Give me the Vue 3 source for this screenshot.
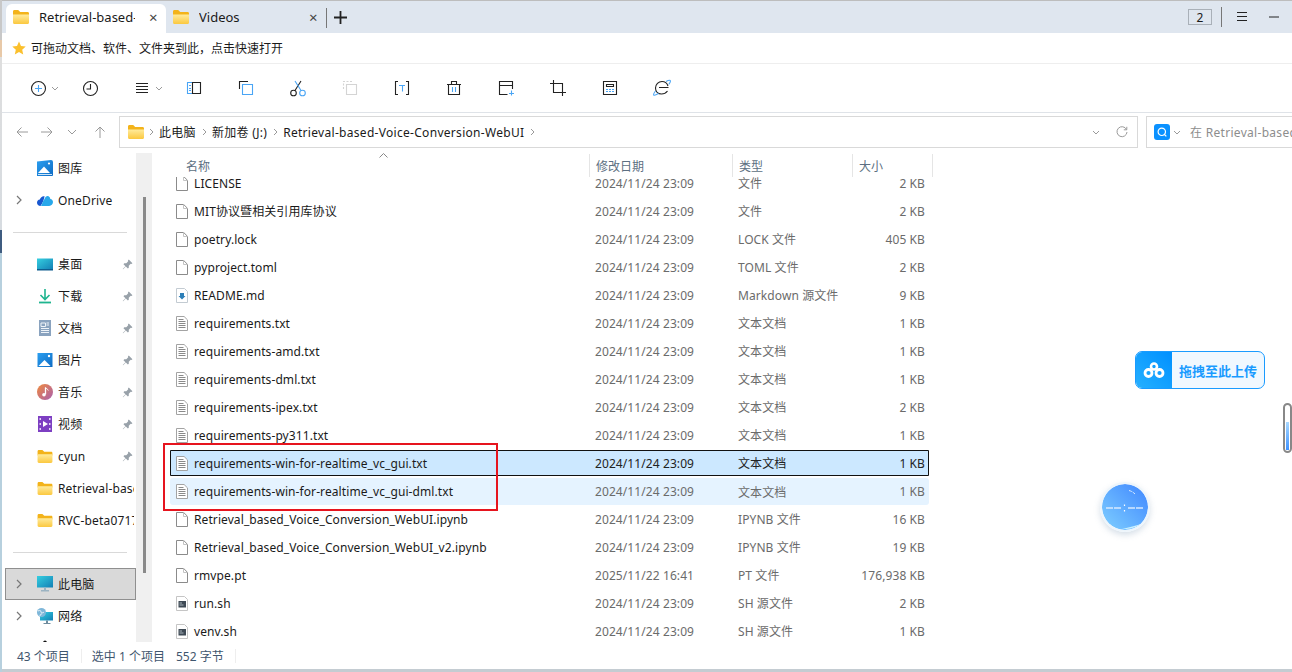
<template>
  <div class="window">
    <svg class="sprite" xmlns="http://www.w3.org/2000/svg">
      <defs>
        <linearGradient id="gFolder" x1="0" y1="0" x2="0" y2="1"><stop offset="0" stop-color="#ffeb9c" /><stop offset="1" stop-color="#fbc83f" /></linearGradient>
        <linearGradient id="gBlue" x1="0" y1="0" x2="1" y2="1"><stop offset="0" stop-color="#2b9ff0" /><stop offset="1" stop-color="#0f6cc4" /></linearGradient>
        <linearGradient id="gTeal" x1="0" y1="0" x2="1" y2="1"><stop offset="0" stop-color="#35cfe0" /><stop offset="1" stop-color="#137fb5" /></linearGradient>
        <linearGradient id="gMusic" x1="0" y1="0" x2="1" y2="1"><stop offset="0" stop-color="#f08a3c" /><stop offset="1" stop-color="#a95fb0" /></linearGradient>
        <linearGradient id="gOrb" x1="1" y1="0" x2="0" y2="1"><stop offset="0" stop-color="#3f86ff" /><stop offset="1" stop-color="#7fd0ff" /></linearGradient>
        <symbol id="folder" viewBox="0 0 16 14">
          <path d="M0 1.500C0 .7.6 0 1.400 0h3.800l2 2H14.600c.8 0 1.400.6 1.400 1.400V6H0z" fill="#f3b31a" />
          <path d="M0 4.500h16v8c0 .8-.6 1.500-1.400 1.500H1.400C.6 14 0 13.300 0 12.500z" fill="url(#gFolder)" />
        </symbol>
        <symbol id="blank" viewBox="0 0 12 15">
          <path d="M.5.5h7.200l3.800 3.800v10.200H.5z" fill="#fff" stroke="#8b8b8b" />
          <path d="M7.500.5v4h4" fill="none" stroke="#c4c4c4" />
        </symbol>
        <symbol id="txt" viewBox="0 0 12 15">
          <path d="M.5.5h7.600l3.400 3.400v10.600H.5z" fill="#fff" stroke="#a3a3a3" />
          <path d="M2.500 3.500h5M2.500 5.500h7M2.500 7.500h7M2.500 9.500h7M2.500 11.500h7" stroke="#8a8a8a" />
        </symbol>
        <symbol id="md" viewBox="0 0 12 15">
          <path d="M.5.5h8l3 3v11H.5z" fill="#fff" stroke="#c3cbd2" />
          <path d="M4 5h4v3h1.500L6 11.500 2.500 8H4z" fill="#2d7fb8" />
        </symbol>
        <symbol id="sh" viewBox="0 0 12 15">
          <path d="M.5.5h8l3 3v11H.5z" fill="#fff" stroke="#c5c5c5" />
          <path d="M2.500 5h7.500v6.500H2.500z" fill="#3f4a55" />
          <path d="M3.500 7h2.500M3.500 9h4" stroke="#a9b4bd" />
        </symbol>
        <symbol id="gallery" viewBox="0 0 16 16">
          <path d="M0 1.500 14 0a2 2 0 0 1 2 2v13a1 1 0 0 1-1 1H0z" fill="url(#gBlue)" />
          <path d="M1 13 7 6.500 13 13z" fill="#fff" />
          <circle cx="12" cy="3.500" r="1.100" fill="#fff" />
          <path d="M1 14h14v1H1z" fill="#cfe6f8" />
        </symbol>
        <symbol id="cloud" viewBox="0 0 16 12">
          <path d="M3.500 11.500C1.500 11.500 0 10 0 8.300c0-1.600 1.200-3 2.800-3.200C3.600 2.600 5.600 1.200 7.600 1.800 7 4.500 6 8.500 3.500 11.500z" fill="#1857d0" />
          <path d="M4 11.500c1.400-3 2.200-5.200 3.500-7C8.300 2.400 10 1 11.500 1.800c1 .5 1.600 1.400 1.800 2.600 1.600.2 2.700 1.600 2.700 3.200 0 2.200-1.700 3.900-3.800 3.900z" fill="#28a8ea" />
        </symbol>
        <symbol id="desk" viewBox="0 0 16 12">
          <path d="M0 0h16v11H0z" fill="url(#gTeal)" />
          <path d="M0 10.500h16V12H0z" fill="#0e5d8f" />
        </symbol>
        <symbol id="down" viewBox="0 0 16 16">
          <path d="M8 1v10M3.500 7 8 11.500 12.500 7" fill="none" stroke="#1fb58f" stroke-width="1.600" />
          <path d="M2 14.500h12" stroke="#1fb58f" stroke-width="1.800" />
        </symbol>
        <symbol id="docs" viewBox="0 0 16 16">
          <path d="M2 0h12v16H2z" fill="#8aa3bf" />
          <path d="M4 3h4.500v3.500H4zM9.500 3h2.500M9.500 5h2.500M4 8.500h8M4 10.500h8M4 12.500h8" stroke="#eef3f8" fill="none" />
        </symbol>
        <symbol id="pic" viewBox="0 0 16 16">
          <path d="M.5 1h15v14H.5z" fill="url(#gBlue)" />
          <path d="M1.500 14 7.500 8 13.500 14z" fill="#fff" />
          <circle cx="12" cy="4" r="1.200" fill="#fff" />
        </symbol>
        <symbol id="music" viewBox="0 0 16 16">
          <circle cx="8" cy="8" r="8" fill="url(#gMusic)" />
          <path d="M8.500 3.500v6.800" stroke="#fff" stroke-width="1.300" />
          <path d="M8.500 3.500c1 1.300 2.300 1.500 2.800 3" stroke="#fff" fill="none" />
          <circle cx="7" cy="10.800" r="1.800" fill="#fff" />
        </symbol>
        <symbol id="video" viewBox="0 0 16 16">
          <path d="M1 0h14v16H1z" fill="#7d3fc2" />
          <path d="M6 5v6l5-3z" fill="#fff" />
          <path d="M2.500 2h1.500v2H2.500zM2.500 7h1.500v2H2.500zM2.500 12h1.500v2H2.500zM12 2h1.500v2H12zM12 7h1.500v2H12zM12 12h1.500v2H12z" fill="#e3d2f6" />
        </symbol>
        <symbol id="pc" viewBox="0 0 16 16">
          <path d="M0 0h16v11.500H0z" fill="url(#gTeal)" />
          <path d="M7 11.500h2v2.500H7zM4 14h8v1.500H4z" fill="#9bb3c2" />
        </symbol>
        <symbol id="net" viewBox="0 0 16 16">
          <path d="M3 4h13v8.500H3z" fill="url(#gTeal)" />
          <path d="M9 12.500h2V15H9zM6.500 15h7v1h-7z" fill="#6f8c9e" />
          <circle cx="4.500" cy="4.500" r="4.500" fill="#7fb7d9" />
          <path d="M1 3c2-1 3-.5 3 1s2 1 3 0M3 8c0-2 1-2 2-2" stroke="#e7f3fa" fill="none" />
        </symbol>
        <symbol id="linux" viewBox="0 0 16 16">
          <ellipse cx="8" cy="3" rx="2" ry="2.500" fill="#111" />
          <ellipse cx="8" cy="10" rx="4" ry="5.500" fill="#111" />
        </symbol>
        <symbol id="pin" viewBox="0 0 12 12">
          <path d="M7.400.6 11.400 4.600 10.300 5.500 9.500 5.200 7.400 7.300 7.400 9.500 6.400 10.400 4.200 8.200 1.200 11.200.8 10.800 3.800 7.800 1.600 5.600 2.500 4.600 4.700 4.600 6.800 2.500 6.500 1.700z" fill="#98a1a9" />
        </symbol>
      </defs>
    </svg>

    <header class="tabs">
      <div class="tab active">
        <svg class="ico-folder"><use href="#folder" /></svg>
        <span class="tab-title">Retrieval-based-Voice</span>
        <span class="tab-x">×</span>
      </div>
      <div class="tab">
        <svg class="ico-folder"><use href="#folder" /></svg>
        <span class="tab-title">Videos</span>
        <span class="tab-x">×</span>
      </div>
      <span class="tab-sep"></span>
      <svg class="tab-plus" width="13" height="13" viewBox="0 0 13 13"><path d="M6.500 0v13M0 6.500h13" stroke="#222" stroke-width="1.800" /></svg>
      <div class="win-btns">
        <span class="count">2</span>
        <span class="win-sep"></span>
        <svg width="14" height="10" viewBox="0 0 14 10"><path d="M2 .5h10M2 4.500h10M2 8.500h10" stroke="#222" /></svg>
        <svg class="win-min" width="12" height="2" viewBox="0 0 12 2"><path d="M1 1h10" stroke="#222" /></svg>
      </div>
    </header>

    <div class="quick">
      <svg width="14" height="14" viewBox="0 0 14 14"><path d="M7 .5 9 5l4.700.5-3.500 3.200 1 4.700L7 11l-4.200 2.400 1-4.700L.3 5.500 5 5z" fill="#fbc02d" /></svg>
      <span>可拖动文档、软件、文件夹到此，点击快速打开</span>
    </div>

    <div class="toolbar">
      <div class="tool">
        <svg class="t" viewBox="0 0 20 20"><circle cx="10.500" cy="10.500" r="7" class="k" /><path d="M10.500 7v7M7 10.500h7" class="b" /></svg>
        <svg class="chev" viewBox="0 0 8 5"><path d="M1 1l3 3 3-3" /></svg>
      </div>
      <div class="tool">
        <svg class="t" viewBox="0 0 20 20"><circle cx="10.500" cy="10.500" r="7" class="k" /><path d="M10.500 6v5H6.500" class="k" /></svg>
      </div>
      <div class="tool">
        <svg class="t" viewBox="0 0 20 20"><path d="M4 5.500h12M4 8.500h12M4 11.500h12M4 14.500h12" class="k" /></svg>
        <svg class="chev" viewBox="0 0 8 5"><path d="M1 1l3 3 3-3" /></svg>
      </div>
      <div class="tool">
        <svg class="t" viewBox="0 0 20 20"><path d="M8.500 4.500h-5v11h5" class="b" /><path d="M8.500 4.500h8v11h-8z" class="k" /><path d="M5 7.500h2M5 10.500h2M5 12.500h2" class="b" /></svg>
      </div>
      <div class="tool">
        <svg class="t" viewBox="0 0 20 20"><path d="M3.500 11V3.500H12" class="k" /><path d="M6.500 6.500h10v10h-10z" class="b" /></svg>
      </div>
      <div class="tool">
        <svg class="t" viewBox="0 0 20 20"><circle cx="5.500" cy="15" r="2.800" class="k" /><circle cx="14.500" cy="15" r="2.800" class="b" /><path d="M7 12.500 13 3" class="k" /><path d="M13 12.500 7 3" class="b" /></svg>
      </div>
      <div class="tool">
        <svg class="t" viewBox="0 0 20 20"><path d="M3.500 11V3.500H12" class="g" stroke-dasharray="2 1.500" /><path d="M6.500 6.500h10v10h-10z" class="g" /></svg>
      </div>
      <div class="tool">
        <svg class="t" viewBox="0 0 20 20"><path d="M6 3.500H3.500v13H6M14 3.500h2.500v13H14" class="k" /><path d="M7 7.500h6M10.500 7.500v6" class="b" /></svg>
      </div>
      <div class="tool">
        <svg class="t" viewBox="0 0 20 20"><path d="M4.500 6.500h11v10h-11zM3 6.500h14M7.500 6V3.500h5V6" class="k" /><path d="M8.500 9v5M11.500 9v5" class="b" /></svg>
      </div>
      <div class="tool">
        <svg class="t" viewBox="0 0 20 20"><path d="M16.500 11V3.500h-13v13h8M3.500 7.500h13" class="k" /><path d="M15.500 12.500v5M13 15.500h5" class="b" /></svg>
      </div>
      <div class="tool">
        <svg class="t" viewBox="0 0 20 20"><path d="M5.500 2v12.500H18M2 5.500h12.500V18" class="k" /></svg>
      </div>
      <div class="tool">
        <svg class="t" viewBox="0 0 20 20"><path d="M3.500 3.500h13v13h-13z" class="k" /><path d="M6.500 6.500h7v2h-7z" class="k" /><path d="M6 11.500h2M9 11.500h2M12 11.500h2M6 13.500h2M9 13.500h2M12 13.500h2" class="b" /></svg>
      </div>
      <div class="tool">
        <svg class="t" viewBox="0 0 20 20"><path d="M16.500 9.500H7M16 8c-.8-2.500-3-4.500-6-4.500-3.500 0-6.500 3-6.500 6.500s2.500 6 6 6c2.500 0 4.500-1 6-3" class="k" /><path d="M14 3.500c2-1 3.500-1.500 4.200-1s-.2 2.500-1.500 4M3.500 13c-1.500 2-2.300 3.500-1.800 4s2.800-.3 4.800-1.500" class="b" /></svg>
      </div>
    </div>

    <div class="address">
      <div class="nav">
        <svg viewBox="0 0 14 14"><path d="M13 7H2M6.500 2.500 2 7l4.500 4.500" /></svg>
        <svg viewBox="0 0 14 14"><path d="M1 7h11M7.500 2.500 12 7l-4.500 4.500" /></svg>
        <svg class="nav-down" viewBox="0 0 14 14"><path d="M3 5l4 4 4-4" /></svg>
        <svg class="nav-up" viewBox="0 0 14 14"><path d="M7 13V2M2.500 6.500 7 2l4.500 4.500" /></svg>
      </div>
      <div class="crumbs">
        <svg class="ico-folder"><use href="#folder" /></svg>
        <template v-for="c in crumbs" :key="c">
          <svg class="crumb-sep" viewBox="0 0 5 8"><path d="M1 1l3 3-3 3" /></svg>
          <span>{{ c }}</span>
        </template>
        <svg class="crumb-sep" viewBox="0 0 5 8"><path d="M1 1l3 3-3 3" /></svg>
        <svg class="crumb-down chev" viewBox="0 0 8 5"><path d="M1 1l3 3 3-3" /></svg>
        <svg class="refresh" width="12" height="12" viewBox="0 0 12 12"><path d="M10.500 3.500A5 5 0 1 0 11 6M10.800 .8v3H7.800" fill="none" stroke="#9a9a9a" /></svg>
      </div>
      <div class="search">
        <span class="search-logo"><svg width="10" height="10" viewBox="0 0 10 10"><circle cx="4.800" cy="4.800" r="3.700" fill="none" stroke="#fff" stroke-width="1.200" /><path d="M7.500 7.500 9.300 9.300" stroke="#fff" stroke-width="1.200" /></svg></span>
        <svg class="chev" viewBox="0 0 8 5"><path d="M1 1l3 3 3-3" /></svg>
        <span class="search-text">在 Retrieval-based-Voice-Conversion-WebUI 中搜索</span>
      </div>
    </div>

    <div class="main">
      <aside class="sidebar">
        <template v-for="(s, i) in sideItems" :key="i">
          <div v-if="s.divider" class="side-div"><span></span></div>
          <div v-else class="side-row" :class="{ current: s.current }">
            <svg v-if="s.arrow" class="side-arrow" viewBox="0 0 6 10"><path d="M1 1l4 4-4 4" /></svg>
            <svg class="side-ico" :class="s.size"><use :href="'#' + s.icon" /></svg>
            <span v-if="s.label" class="side-label">{{ s.label }}</span>
            <svg v-if="s.pin" class="side-pin"><use href="#pin" /></svg>
          </div>
        </template>
      </aside>
      <div class="side-track"><span class="side-thumb"></span></div>

      <section class="files">
        <div class="head">
          <div class="head-cell">名称<svg class="sort" viewBox="0 0 9 5"><path d="M.5 4.500 4.500 .5l4 4" /></svg></div>
          <div class="head-cell">修改日期</div>
          <div class="head-cell">类型</div>
          <div class="head-cell">大小</div>
        </div>
        <div class="list">
          <div class="list-inner">
            <div v-for="f in files" :key="f.name" class="row" :class="f.state">
              <div class="name">
                <svg class="file-ico"><use :href="'#' + f.icon" /></svg>
                <span>{{ f.name }}</span>
              </div>
              <div class="cell">{{ f.date }}</div>
              <div class="cell">{{ f.type }}</div>
              <div class="cell size">{{ f.size }}</div>
            </div>
          </div>
        </div>
      </section>
    </div>

    <footer class="status">
      <span>43 个项目</span>
      <span class="status-sep"></span>
      <span>选中 1 个项目</span>
      <span class="status-bytes">552 字节</span>
      <span class="status-sep last"></span>
    </footer>
    <div class="bottom-edge"></div>

    <!-- sliver of desktop to the left of the window -->
    <div class="desk-edge"></div>

    <div class="red-box"></div>

    <div class="upload">
      <span class="upload-logo">
        <svg width="22" height="16" viewBox="0 0 22 16">
          <circle cx="11" cy="4.500" r="3" fill="none" stroke="#fff" stroke-width="2.600" />
          <circle cx="5.500" cy="11" r="3.500" fill="none" stroke="#fff" stroke-width="2.800" />
          <circle cx="16.500" cy="11" r="3.500" fill="none" stroke="#fff" stroke-width="2.800" />
        </svg>
      </span>
      <span class="upload-text">拖拽至此上传</span>
    </div>

    <div class="edge-slider"><span></span></div>

    <div class="orb">
      <svg width="46" height="46" viewBox="0 0 46 46">
        <circle cx="23" cy="23" r="23" fill="url(#gOrb)" />
        <path d="M4 24h7M12 24h7M26 24h7M34 24h7" stroke="#d6e9ff" stroke-width="1.400" />
        <path d="M22.500 20.500v1.500M22.500 26v1.500" stroke="#fff" stroke-width="1.200" />
        <path d="M27 6.500c2 .5 4 1.500 6 3.500" stroke="#dcecff" stroke-width="1" fill="none" stroke-dasharray="3 1" />
        <path d="M20 45c6 .5 14-1 19-5-5 2-12 3-19 5z" fill="#c9f1ff" />
      </svg>
    </div>
  </div>
</template>

<script setup>
const crumbs = ['此电脑', '新加卷 (J:)', 'Retrieval-based-Voice-Conversion-WebUI']

const sideItems = [
  { icon: 'gallery', label: '图库' },
  { icon: 'cloud', label: 'OneDrive', arrow: true, size: 'wide' },
  { divider: true },
  { icon: 'desk', label: '桌面', pin: true, size: 'wide' },
  { icon: 'down', label: '下载', pin: true },
  { icon: 'docs', label: '文档', pin: true },
  { icon: 'pic', label: '图片', pin: true },
  { icon: 'music', label: '音乐', pin: true },
  { icon: 'video', label: '视频', pin: true },
  { icon: 'folder', label: 'cyun', pin: true, size: 'wide' },
  { icon: 'folder', label: 'Retrieval-based-Voice', size: 'wide' },
  { icon: 'folder', label: 'RVC-beta0717', size: 'wide' },
  { divider: true },
  { icon: 'pc', label: '此电脑', arrow: true, current: true },
  { icon: 'net', label: '网络', arrow: true },
  { icon: 'linux' }
]

const d = '2024/11/24 23:09'
const files = [
  { name: 'LICENSE', icon: 'blank', date: d, type: '文件', size: '2 KB' },
  { name: 'MIT协议暨相关引用库协议', icon: 'blank', date: d, type: '文件', size: '2 KB' },
  { name: 'poetry.lock', icon: 'blank', date: d, type: 'LOCK 文件', size: '405 KB' },
  { name: 'pyproject.toml', icon: 'blank', date: d, type: 'TOML 文件', size: '2 KB' },
  { name: 'README.md', icon: 'md', date: d, type: 'Markdown 源文件', size: '9 KB' },
  { name: 'requirements.txt', icon: 'txt', date: d, type: '文本文档', size: '1 KB' },
  { name: 'requirements-amd.txt', icon: 'txt', date: d, type: '文本文档', size: '1 KB' },
  { name: 'requirements-dml.txt', icon: 'txt', date: d, type: '文本文档', size: '1 KB' },
  { name: 'requirements-ipex.txt', icon: 'txt', date: d, type: '文本文档', size: '2 KB' },
  { name: 'requirements-py311.txt', icon: 'txt', date: d, type: '文本文档', size: '1 KB' },
  { name: 'requirements-win-for-realtime_vc_gui.txt', icon: 'txt', date: d, type: '文本文档', size: '1 KB', state: 'selected' },
  { name: 'requirements-win-for-realtime_vc_gui-dml.txt', icon: 'txt', date: d, type: '文本文档', size: '1 KB', state: 'hovered' },
  { name: 'Retrieval_based_Voice_Conversion_WebUI.ipynb', icon: 'blank', date: d, type: 'IPYNB 文件', size: '16 KB' },
  { name: 'Retrieval_based_Voice_Conversion_WebUI_v2.ipynb', icon: 'blank', date: d, type: 'IPYNB 文件', size: '19 KB' },
  { name: 'rmvpe.pt', icon: 'blank', date: '2025/11/22 16:41', type: 'PT 文件', size: '176,938 KB' },
  { name: 'run.sh', icon: 'sh', date: d, type: 'SH 源文件', size: '2 KB' },
  { name: 'venv.sh', icon: 'sh', date: d, type: 'SH 源文件', size: '1 KB' }
]
</script>

<style>
html, body {
  margin: 0;
  background: #fff;
}
</style>

<style scoped>
.window {
  width: 1292px;
  height: 672px;
  position: relative;
  overflow: hidden;
  display: flex;
  flex-direction: column;
  background: #fff;
  color: #1a1a1a;
  font-family: "Noto Sans", "Noto Sans CJK SC", sans-serif;
  font-size: 12px;
}

.sprite {
  position: absolute;
  width: 0;
  height: 0;
}

.ico-folder {
  width: 16px;
  height: 14px;
  flex-shrink: 0;
}

/* tabs */
.tabs {
  height: 33px;
  flex-shrink: 0;
  display: flex;
  align-items: flex-end;
  padding-left: 6px;
  background: #dfe6ef;
  border-top: 1px solid #bdbdbd;
  box-sizing: border-box;
}

.tab {
  width: 160px;
  height: 29px;
  display: flex;
  align-items: center;
  padding: 0 0 3px 7px;
  box-sizing: border-box;
  font-size: 13px;
}

.tab.active {
  background: #fff;
  border-radius: 6px 6px 0 0;
}

.tab-title {
  width: 96px;
  margin-left: 10px;
  white-space: nowrap;
  overflow: hidden;
}

.tab-x {
  margin-left: 14px;
  font-size: 15px;
  color: #444;
}

.tab-sep {
  width: 1px;
  height: 20px;
  margin: 0 0 5px 0;
  background: #777;
}

.tab-plus {
  margin: 0 0 9px 7px;
}

.win-btns {
  margin-left: auto;
  height: 32px;
  display: flex;
  align-items: center;
  padding-right: 12px;
}

.count {
  width: 24px;
  height: 16px;
  line-height: 15px;
  text-align: center;
  border: 1px solid #a9b0b8;
  box-sizing: border-box;
  font-size: 12px;
}

.win-sep {
  width: 1px;
  height: 20px;
  background: #777;
  margin: 0 13px 0 9px;
}

.win-min {
  margin-left: 19px;
}

/* quick access bar */
.quick {
  height: 31px;
  flex-shrink: 0;
  display: flex;
  align-items: center;
  gap: 5px;
  padding-left: 12px;
  border-bottom: 1px solid #eeeeee;
  box-sizing: border-box;
  font-size: 12px;
}

/* toolbar */
.toolbar {
  height: 49px;
  flex-shrink: 0;
  display: flex;
  align-items: center;
  padding-left: 12px;
  border-bottom: 1px solid #dfe3e8;
  box-sizing: border-box;
}

.tool {
  width: 52px;
  padding-left: 16px;
  box-sizing: border-box;
  display: flex;
  align-items: center;
}

.t {
  width: 20px;
  height: 20px;
  flex-shrink: 0;
  fill: none;
}

.t .k {
  stroke: #222;
  stroke-width: 1.1;
}

.t .b {
  stroke: #4aa5f5;
  stroke-width: 1.1;
}

.t .g {
  stroke: #d4d4d4;
  stroke-width: 1.1;
}

.chev {
  width: 8px;
  height: 5px;
  fill: none;
  stroke: #9a9a9a;
  flex-shrink: 0;
}

.tool .chev {
  margin-left: 3px;
}

/* address */
.address {
  height: 37px;
  flex-shrink: 0;
  display: flex;
  align-items: center;
  padding-top: 1px;
  box-sizing: border-box;
}

.nav {
  width: 119px;
  display: flex;
  align-items: center;
  padding-left: 15px;
  box-sizing: border-box;
  flex-shrink: 0;
}

.nav svg {
  width: 14px;
  height: 14px;
  fill: none;
  stroke: #9a9a9a;
  margin-right: 11px;
}

.nav .nav-down {
  margin-right: 14px;
}

.crumbs {
  width: 1019px;
  height: 32px;
  flex-shrink: 0;
  display: flex;
  align-items: center;
  padding-left: 8px;
  border: 1px solid #d9d9d9;
  box-sizing: border-box;
  letter-spacing: 0.3px;
}

.crumbs .ico-folder {
  margin-right: -1px;
}

.crumb-sep {
  width: 5px;
  height: 8px;
  margin: 0 5px 0 6px;
  fill: none;
  stroke: #9a9a9a;
  flex-shrink: 0;
}

.crumb-down {
  margin-left: auto;
}

.refresh {
  margin: 0 9px 0 16px;
}

.search {
  width: 146px;
  height: 32px;
  margin-left: 8px;
  flex-shrink: 0;
  display: flex;
  align-items: center;
  padding-left: 7px;
  border: 1px solid #d9d9d9;
  border-right: 0;
  box-sizing: border-box;
  overflow: hidden;
  white-space: nowrap;
  color: #8d8d8d;
  letter-spacing: 0.3px;
}

.search-logo {
  width: 16px;
  height: 16px;
  border-radius: 3px;
  background: #0a91ff;
  display: flex;
  align-items: center;
  justify-content: center;
  flex-shrink: 0;
}

.search .chev {
  margin: 0 9px 0 3px;
}

/* main */
.main {
  flex: 1;
  min-height: 0;
  display: flex;
}

.sidebar {
  width: 136px;
  flex-shrink: 0;
  padding: 2px 0 0 3px;
  box-sizing: border-box;
  overflow: hidden;
  letter-spacing: 0.15px;
}

.side-row {
  height: 32px;
  display: flex;
  align-items: center;
  position: relative;
  padding-left: 34px;
  box-sizing: border-box;
  white-space: nowrap;
}

.side-row.current {
  margin-left: 2px;
  padding-left: 31px;
  background: #d9d9d9;
  border: 1px solid #8f8f8f;
}

.side-arrow {
  position: absolute;
  left: 13px;
  top: 11px;
  width: 6px;
  height: 10px;
  fill: none;
  stroke: #777;
  stroke-width: 1.2;
}

.side-row.current .side-arrow {
  left: 10px;
  top: 10px;
}

.side-ico {
  width: 16px;
  height: 16px;
  flex-shrink: 0;
}

.side-ico.wide {
  width: 16px;
  height: 13px;
}

.side-label {
  margin-left: 5px;
  width: 76px;
  overflow: hidden;
}

.side-row.current .side-label {
  width: auto;
}

.side-pin {
  width: 11px;
  height: 11px;
  margin-left: -12px;
  flex-shrink: 0;
}

.side-div {
  height: 32px;
  display: flex;
  align-items: center;
  padding: 0 9px 0 10px;
}

.side-div span {
  flex: 1;
  height: 1px;
  background: #d9d9d9;
}

.side-track {
  width: 16px;
  margin-top: 3px;
  flex-shrink: 0;
  display: flex;
  justify-content: center;
  background: #f0f0f0;
}

.side-thumb {
  width: 3px;
  height: 376px;
  margin-top: 44px;
  background: #8a8a8a;
}

/* file list */
.files {
  flex: 1;
  min-width: 0;
  display: flex;
  flex-direction: column;
  padding-left: 18px;
}

.head {
  height: 27px;
  flex-shrink: 0;
  display: grid;
  grid-template-columns: 420px 143px 120px 80px;
  padding-top: 4px;
  box-sizing: border-box;
  color: #5c6f82;
}

.head-cell {
  position: relative;
  display: flex;
  align-items: center;
  padding-left: 6px;
  border-right: 1px solid #e5e5e5;
  box-sizing: border-box;
}

.head-cell:first-child {
  padding-left: 16px;
}

.sort {
  position: absolute;
  left: 209px;
  top: -1px;
  width: 9px;
  height: 5px;
  fill: none;
  stroke: #888;
}

.list {
  flex: 1;
  min-height: 0;
  overflow: hidden;
}

.list-inner {
  display: flex;
  flex-direction: column;
  margin-top: -8px;
  letter-spacing: 0.09px;
}

.row {
  width: 759px;
  height: 28px;
  flex-shrink: 0;
  display: grid;
  grid-template-columns: 419px 143px 120px 73px;
  align-items: center;
  box-sizing: border-box;
  white-space: nowrap;
}

.row.selected {
  height: 26px;
  margin: 1px 0;
  background: #cce8ff;
  box-shadow: inset 0 0 0 1px #111;
  border-radius: 1px;
}

.row.hovered {
  height: 27px;
  margin-top: 1px;
  background: #e5f3ff;
  border-radius: 3px;
}

.name {
  display: flex;
  align-items: center;
  padding-left: 6px;
}

.file-ico {
  width: 12px;
  height: 15px;
  margin-right: 6px;
  flex-shrink: 0;
}

.cell {
  padding-left: 6px;
  color: #6b6b6b;
}

.row.selected .cell {
  color: #222;
}

.size {
  text-align: right;
  padding-left: 0;
}

/* status */
.status {
  height: 27px;
  flex-shrink: 0;
  display: flex;
  align-items: center;
  padding-left: 17px;
  color: #3f566e;
  background: #fff;
  position: relative;
}

.status-sep {
  width: 1px;
  height: 14px;
  margin: 0 10px 0 11px;
  background: #eee;
}

.status-bytes {
  margin-left: 11px;
}

.bottom-edge {
  height: 3px;
  flex-shrink: 0;
  background: #c4ccd2;
}

/* overlays */
.desk-edge {
  position: absolute;
  left: 0;
  top: 0;
  width: 2px;
  height: 100%;
  background: linear-gradient(180deg, #c8c8c8 0, #c8c8c8 40px, #e8c9a8 40px, #e8c9a8 57px, #dedede 57px, #d6dbe0 230px, #3f5c80 230px, #3f5c80 253px, #b7d0de 253px, #b7d0de 100%);
}

.red-box {
  position: absolute;
  left: 163px;
  top: 443px;
  width: 335px;
  height: 68px;
  border: 2px solid #e6141e;
  box-sizing: border-box;
}

.upload {
  position: absolute;
  left: 1135px;
  top: 351px;
  width: 130px;
  height: 38px;
  display: flex;
  align-items: center;
  border: 1px solid #1a9bff;
  border-radius: 7px;
  background: #f0f8ff;
  box-sizing: border-box;
  overflow: hidden;
}

.upload-logo {
  width: 36px;
  height: 100%;
  display: flex;
  align-items: center;
  justify-content: center;
  background: linear-gradient(45deg, #26b0ff, #0090ff);
}

.upload-text {
  margin-left: 7px;
  font-size: 13px;
  font-weight: 700;
  color: #1a9bff;
}

.edge-slider {
  position: absolute;
  left: 1283px;
  top: 403px;
  width: 9px;
  height: 50px;
  padding: 0 1px 1px;
  border: 2px solid #888;
  border-radius: 5px;
  box-sizing: border-box;
  display: flex;
  align-items: flex-end;
  background: #fff;
}

.edge-slider span {
  width: 100%;
  height: 28px;
  background: linear-gradient(180deg, #a8d8ff, #3f93ff);
}

.orb {
  position: absolute;
  left: 1100px;
  top: 482px;
  width: 50px;
  height: 50px;
  border-radius: 50%;
  border: 2px solid #edf5fb;
  box-shadow: 0 3px 6px rgba(120, 150, 180, 0.3);
  box-sizing: border-box;
  overflow: hidden;
}

.orb svg {
  display: block;
}
</style>
